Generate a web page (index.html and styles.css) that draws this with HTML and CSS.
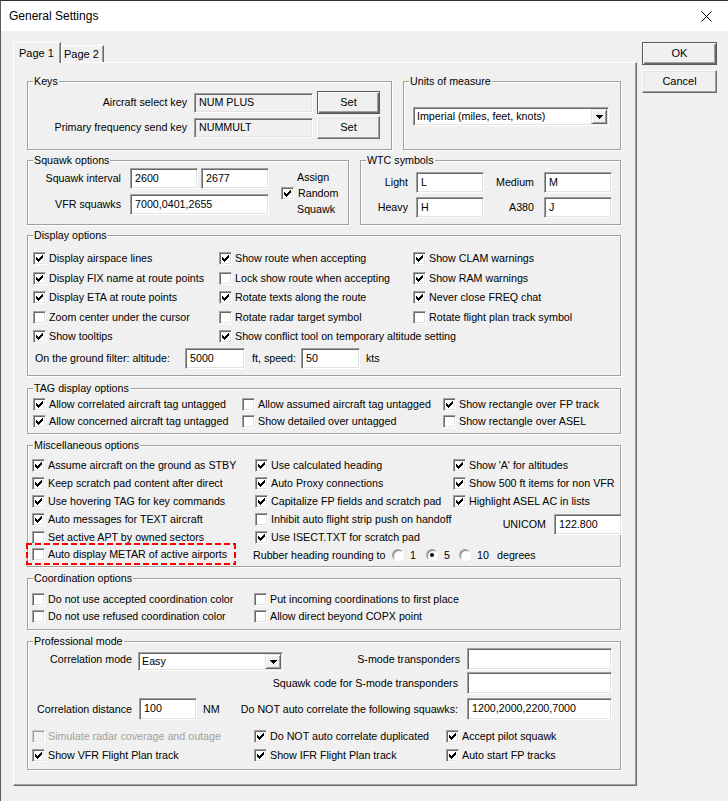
FILE: index.html
```html
<!DOCTYPE html>
<html>
<head>
<meta charset="utf-8">
<title>General Settings</title>
<link rel="stylesheet" href="styles.css">
</head>
<body>
<div class="window">
  <div class="titlebar">
    <span class="ttl">General Settings</span>
    <svg class="close" width="11" height="11" viewBox="0 0 11 11"><path d="M0.5 0.5L10.5 10.5M10.5 0.5L0.5 10.5" stroke="#000" stroke-width="1" fill="none"/></svg>
  </div>
  <div class="client">
    <div class="tabs">
      <div class="tabstrip">
        <div class="tab sel">Page 1</div>
        <div class="tab t2">Page 2</div>
      </div>
      <div class="panel">

        <div class="row r1">
          <div class="grp keys">
            <div class="lg">Keys</div>
            <div class="krow k1"><span class="klbl">Aircraft select key</span><span class="ed ro kin">NUM PLUS</span><span class="btn def kbtn">Set</span></div>
            <div class="krow k2"><span class="klbl">Primary frequency send key</span><span class="ed ro kin">NUMMULT</span><span class="btn kbtn">Set</span></div>
          </div>
          <div class="grp units">
            <div class="lg">Units of measure</div>
            <div class="combo ucombo"><span class="ctext">Imperial (miles, feet, knots)</span><span class="cbtn"><svg width="7" height="4" viewBox="0 0 7 4"><path d="M0 0h7v1h-1v1h-1v1h-1v1h-1v-1h-1v-1h-1v-1h-1z"/></svg></span></div>
          </div>
        </div>

        <div class="row r2">
          <div class="grp sq">
            <div class="lg">Squawk options</div>
            <div class="sqbody">
              <div class="sqleft">
                <div class="sqrow s1"><span class="sqlbl">Squawk interval</span><span class="ed sqi">2600</span><span class="ed sqi sqi2">2677</span></div>
                <div class="sqrow s2"><span class="sqlbl">VFR squawks</span><span class="ed sqw">7000,0401,2655</span></div>
              </div>
              <div class="assign">
                <div class="as1">Assign</div>
                <label class="chk as2"><span class="cb"><svg viewBox="0 0 7 7" width="7" height="7"><path d="M0 2h1v3H0zM1 3h1v3H1zM2 4h1v3H2zM3 3h1v3H3zM4 2h1v3H4zM5 1h1v3H5zM6 0h1v3H6z"/></svg></span>Random</label>
                <div class="as3">Squawk</div>
              </div>
            </div>
          </div>
          <div class="grp wtc">
            <div class="lg">WTC symbols</div>
            <div class="wgrid">
              <span class="wl1">Light</span><span class="ed">L</span><span class="wl2">Medium</span><span class="ed">M</span>
              <span class="wl1">Heavy</span><span class="ed">H</span><span class="wl2">A380</span><span class="ed">J</span>
            </div>
          </div>
        </div>

        <div class="grp full disp">
          <div class="lg">Display options</div>
          <div class="cgrid dgrid">
            <label class="chk"><span class="cb"><svg viewBox="0 0 7 7" width="7" height="7"><path d="M0 2h1v3H0zM1 3h1v3H1zM2 4h1v3H2zM3 3h1v3H3zM4 2h1v3H4zM5 1h1v3H5zM6 0h1v3H6z"/></svg></span>Display airspace lines</label>
            <label class="chk"><span class="cb"><svg viewBox="0 0 7 7" width="7" height="7"><path d="M0 2h1v3H0zM1 3h1v3H1zM2 4h1v3H2zM3 3h1v3H3zM4 2h1v3H4zM5 1h1v3H5zM6 0h1v3H6z"/></svg></span>Show route when accepting</label>
            <label class="chk"><span class="cb"><svg viewBox="0 0 7 7" width="7" height="7"><path d="M0 2h1v3H0zM1 3h1v3H1zM2 4h1v3H2zM3 3h1v3H3zM4 2h1v3H4zM5 1h1v3H5zM6 0h1v3H6z"/></svg></span>Show CLAM warnings</label>

            <label class="chk"><span class="cb"><svg viewBox="0 0 7 7" width="7" height="7"><path d="M0 2h1v3H0zM1 3h1v3H1zM2 4h1v3H2zM3 3h1v3H3zM4 2h1v3H4zM5 1h1v3H5zM6 0h1v3H6z"/></svg></span>Display FIX name at route points</label>
            <label class="chk"><span class="cb"></span>Lock show route when accepting</label>
            <label class="chk"><span class="cb"><svg viewBox="0 0 7 7" width="7" height="7"><path d="M0 2h1v3H0zM1 3h1v3H1zM2 4h1v3H2zM3 3h1v3H3zM4 2h1v3H4zM5 1h1v3H5zM6 0h1v3H6z"/></svg></span>Show RAM warnings</label>

            <label class="chk"><span class="cb"><svg viewBox="0 0 7 7" width="7" height="7"><path d="M0 2h1v3H0zM1 3h1v3H1zM2 4h1v3H2zM3 3h1v3H3zM4 2h1v3H4zM5 1h1v3H5zM6 0h1v3H6z"/></svg></span>Display ETA at route points</label>
            <label class="chk"><span class="cb"><svg viewBox="0 0 7 7" width="7" height="7"><path d="M0 2h1v3H0zM1 3h1v3H1zM2 4h1v3H2zM3 3h1v3H3zM4 2h1v3H4zM5 1h1v3H5zM6 0h1v3H6z"/></svg></span>Rotate texts along the route</label>
            <label class="chk"><span class="cb"><svg viewBox="0 0 7 7" width="7" height="7"><path d="M0 2h1v3H0zM1 3h1v3H1zM2 4h1v3H2zM3 3h1v3H3zM4 2h1v3H4zM5 1h1v3H5zM6 0h1v3H6z"/></svg></span>Never close FREQ chat</label>

            <label class="chk"><span class="cb"></span>Zoom center under the cursor</label>
            <label class="chk"><span class="cb"></span>Rotate radar target symbol</label>
            <label class="chk"><span class="cb"></span>Rotate flight plan track symbol</label>

            <label class="chk"><span class="cb"><svg viewBox="0 0 7 7" width="7" height="7"><path d="M0 2h1v3H0zM1 3h1v3H1zM2 4h1v3H2zM3 3h1v3H3zM4 2h1v3H4zM5 1h1v3H5zM6 0h1v3H6z"/></svg></span>Show tooltips</label>
            <label class="chk span2"><span class="cb"><svg viewBox="0 0 7 7" width="7" height="7"><path d="M0 2h1v3H0zM1 3h1v3H1zM2 4h1v3H2zM3 3h1v3H3zM4 2h1v3H4zM5 1h1v3H5zM6 0h1v3H6z"/></svg></span>Show conflict tool on temporary altitude setting</label>
          </div>
          <div class="filt">
            <span class="fl1">On the ground filter: altitude:</span><span class="ed fi1">5000</span><span class="fl2">ft, speed:</span><span class="ed fi2">50</span><span class="fl3">kts</span>
          </div>
        </div>

        <div class="grp full tag">
          <div class="lg">TAG display options</div>
          <div class="cgrid tgrid">
            <label class="chk"><span class="cb"><svg viewBox="0 0 7 7" width="7" height="7"><path d="M0 2h1v3H0zM1 3h1v3H1zM2 4h1v3H2zM3 3h1v3H3zM4 2h1v3H4zM5 1h1v3H5zM6 0h1v3H6z"/></svg></span>Allow correlated aircraft tag untagged</label>
            <label class="chk"><span class="cb"></span>Allow assumed aircraft tag untagged</label>
            <label class="chk"><span class="cb"><svg viewBox="0 0 7 7" width="7" height="7"><path d="M0 2h1v3H0zM1 3h1v3H1zM2 4h1v3H2zM3 3h1v3H3zM4 2h1v3H4zM5 1h1v3H5zM6 0h1v3H6z"/></svg></span>Show rectangle over FP track</label>
            <label class="chk"><span class="cb"><svg viewBox="0 0 7 7" width="7" height="7"><path d="M0 2h1v3H0zM1 3h1v3H1zM2 4h1v3H2zM3 3h1v3H3zM4 2h1v3H4zM5 1h1v3H5zM6 0h1v3H6z"/></svg></span>Allow concerned aircraft tag untagged</label>
            <label class="chk"><span class="cb"></span>Show detailed over untagged</label>
            <label class="chk"><span class="cb"></span>Show rectangle over ASEL</label>
          </div>
        </div>

        <div class="grp full misc">
          <div class="lg">Miscellaneous options</div>
          <div class="cgrid mgrid">
            <label class="chk"><span class="cb"><svg viewBox="0 0 7 7" width="7" height="7"><path d="M0 2h1v3H0zM1 3h1v3H1zM2 4h1v3H2zM3 3h1v3H3zM4 2h1v3H4zM5 1h1v3H5zM6 0h1v3H6z"/></svg></span>Assume aircraft on the ground as STBY</label>
            <label class="chk"><span class="cb"><svg viewBox="0 0 7 7" width="7" height="7"><path d="M0 2h1v3H0zM1 3h1v3H1zM2 4h1v3H2zM3 3h1v3H3zM4 2h1v3H4zM5 1h1v3H5zM6 0h1v3H6z"/></svg></span>Use calculated heading</label>
            <label class="chk"><span class="cb"><svg viewBox="0 0 7 7" width="7" height="7"><path d="M0 2h1v3H0zM1 3h1v3H1zM2 4h1v3H2zM3 3h1v3H3zM4 2h1v3H4zM5 1h1v3H5zM6 0h1v3H6z"/></svg></span>Show 'A' for altitudes</label>

            <label class="chk"><span class="cb"><svg viewBox="0 0 7 7" width="7" height="7"><path d="M0 2h1v3H0zM1 3h1v3H1zM2 4h1v3H2zM3 3h1v3H3zM4 2h1v3H4zM5 1h1v3H5zM6 0h1v3H6z"/></svg></span>Keep scratch pad content after direct</label>
            <label class="chk"><span class="cb"><svg viewBox="0 0 7 7" width="7" height="7"><path d="M0 2h1v3H0zM1 3h1v3H1zM2 4h1v3H2zM3 3h1v3H3zM4 2h1v3H4zM5 1h1v3H5zM6 0h1v3H6z"/></svg></span>Auto Proxy connections</label>
            <label class="chk"><span class="cb"><svg viewBox="0 0 7 7" width="7" height="7"><path d="M0 2h1v3H0zM1 3h1v3H1zM2 4h1v3H2zM3 3h1v3H3zM4 2h1v3H4zM5 1h1v3H5zM6 0h1v3H6z"/></svg></span>Show 500 ft items for non VFR</label>

            <label class="chk"><span class="cb"><svg viewBox="0 0 7 7" width="7" height="7"><path d="M0 2h1v3H0zM1 3h1v3H1zM2 4h1v3H2zM3 3h1v3H3zM4 2h1v3H4zM5 1h1v3H5zM6 0h1v3H6z"/></svg></span>Use hovering TAG for key commands</label>
            <label class="chk"><span class="cb"><svg viewBox="0 0 7 7" width="7" height="7"><path d="M0 2h1v3H0zM1 3h1v3H1zM2 4h1v3H2zM3 3h1v3H3zM4 2h1v3H4zM5 1h1v3H5zM6 0h1v3H6z"/></svg></span>Capitalize FP fields and scratch pad</label>
            <label class="chk"><span class="cb"><svg viewBox="0 0 7 7" width="7" height="7"><path d="M0 2h1v3H0zM1 3h1v3H1zM2 4h1v3H2zM3 3h1v3H3zM4 2h1v3H4zM5 1h1v3H5zM6 0h1v3H6z"/></svg></span>Highlight ASEL AC in lists</label>

            <label class="chk"><span class="cb"><svg viewBox="0 0 7 7" width="7" height="7"><path d="M0 2h1v3H0zM1 3h1v3H1zM2 4h1v3H2zM3 3h1v3H3zM4 2h1v3H4zM5 1h1v3H5zM6 0h1v3H6z"/></svg></span>Auto messages for TEXT aircraft</label>
            <label class="chk"><span class="cb"></span>Inhibit auto flight strip push on handoff</label>
            <div class="unicom"><span class="ul">UNICOM</span><span class="ed ui">122.800</span></div>

            <label class="chk"><span class="cb"></span>Set active APT by owned sectors</label>
            <label class="chk"><span class="cb"><svg viewBox="0 0 7 7" width="7" height="7"><path d="M0 2h1v3H0zM1 3h1v3H1zM2 4h1v3H2zM3 3h1v3H3zM4 2h1v3H4zM5 1h1v3H5zM6 0h1v3H6z"/></svg></span>Use ISECT.TXT for scratch pad</label>

            <div class="hlcell"><div class="hl"><label class="chk"><span class="cb"></span>Auto display METAR of active airports</label></div></div>
            <div class="rubber span2">
              <span class="rt">Rubber heading rounding to</span>
              <span class="rad r1w"><span class="rb"></span>1</span>
              <span class="rad r2w"><span class="rb"><span class="dot"></span></span>5</span>
              <span class="rad r3w"><span class="rb"></span>10</span>
              <span class="deg">degrees</span>
            </div>
          </div>
        </div>

        <div class="grp full coord">
          <div class="lg">Coordination options</div>
          <div class="cgrid cogrid">
            <label class="chk"><span class="cb"></span>Do not use accepted coordination color</label>
            <label class="chk"><span class="cb"></span>Put incoming coordinations to first place</label>
            <label class="chk"><span class="cb"></span>Do not use refused coordination color</label>
            <label class="chk"><span class="cb"></span>Allow direct beyond COPX point</label>
          </div>
        </div>

        <div class="grp full prof">
          <div class="lg">Professional mode</div>
          <div class="prow pa">
            <span class="pl1">Correlation mode</span>
            <span class="combo cm"><span class="ctext">Easy</span><span class="cbtn"><svg width="7" height="4" viewBox="0 0 7 4"><path d="M0 0h7v1h-1v1h-1v1h-1v1h-1v-1h-1v-1h-1v-1h-1z"/></svg></span></span>
            <span class="pr pr1">S-mode transponders</span>
            <span class="ed pin"></span>
          </div>
          <div class="prow pb">
            <span class="pr pr2">Squawk code for S-mode transponders</span>
            <span class="ed pin"></span>
          </div>
          <div class="prow pc">
            <span class="pl2">Correlation distance</span>
            <span class="ed cdi">100</span>
            <span class="nm">NM</span>
            <span class="pr pr2">Do NOT auto correlate the following squawks:</span>
            <span class="ed pin">1200,2000,2200,7000</span>
          </div>
          <div class="cgrid pgrid">
            <label class="chk dis"><span class="cb"></span>Simulate radar coverage and outage</label>
            <label class="chk"><span class="cb"><svg viewBox="0 0 7 7" width="7" height="7"><path d="M0 2h1v3H0zM1 3h1v3H1zM2 4h1v3H2zM3 3h1v3H3zM4 2h1v3H4zM5 1h1v3H5zM6 0h1v3H6z"/></svg></span>Do NOT auto correlate duplicated</label>
            <label class="chk"><span class="cb"><svg viewBox="0 0 7 7" width="7" height="7"><path d="M0 2h1v3H0zM1 3h1v3H1zM2 4h1v3H2zM3 3h1v3H3zM4 2h1v3H4zM5 1h1v3H5zM6 0h1v3H6z"/></svg></span>Accept pilot squawk</label>
            <label class="chk"><span class="cb"><svg viewBox="0 0 7 7" width="7" height="7"><path d="M0 2h1v3H0zM1 3h1v3H1zM2 4h1v3H2zM3 3h1v3H3zM4 2h1v3H4zM5 1h1v3H5zM6 0h1v3H6z"/></svg></span>Show VFR Flight Plan track</label>
            <label class="chk"><span class="cb"><svg viewBox="0 0 7 7" width="7" height="7"><path d="M0 2h1v3H0zM1 3h1v3H1zM2 4h1v3H2zM3 3h1v3H3zM4 2h1v3H4zM5 1h1v3H5zM6 0h1v3H6z"/></svg></span>Show IFR Flight Plan track</label>
            <label class="chk"><span class="cb"><svg viewBox="0 0 7 7" width="7" height="7"><path d="M0 2h1v3H0zM1 3h1v3H1zM2 4h1v3H2zM3 3h1v3H3zM4 2h1v3H4zM5 1h1v3H5zM6 0h1v3H6z"/></svg></span>Auto start FP tracks</label>
          </div>
        </div>

      </div>
    </div>
    <div class="side">
      <div class="btn def sbtn">OK</div>
      <div class="btn sbtn cbtn2">Cancel</div>
    </div>
  </div>
</div>
</body>
</html>
```

FILE: styles.css
```css
* { box-sizing: border-box; }
html, body { margin: 0; padding: 0; }
body {
  width: 728px;
  height: 801px;
  overflow: hidden;
  background: #f0f0f0;
  font-family: "Liberation Sans", Arial, sans-serif;
  font-size: 10.7px;
  line-height: 13px;
  color: #000;
}
svg { display: block; shape-rendering: crispEdges; }
.window {
  height: 801px;
  border-top: 1px solid #2e2e2e;
  border-left: 1px solid #5c5c5c;
}
.titlebar {
  height: 30px;
  background: #fff;
  display: flex;
  align-items: center;
  justify-content: space-between;
  padding: 0 16px 0 8px;
  font-size: 12px;
}
.titlebar .close { shape-rendering: auto; }
.client {
  display: flex;
  padding: 11px 0 0 12px;
}
.tabs { width: 624px; }
.tabstrip {
  display: flex;
  align-items: flex-end;
  height: 20px;
}
.tab {
  background: #f0f0f0;
  border-top: 1px solid #fff;
  border-left: 1px solid #fff;
  border-right: 1px solid #696969;
  box-shadow: inset -1px 0 #a0a0a0;
  display: flex;
  align-items: center;
  font-size: 11px;
}
.tab.sel {
  width: 48px;
  height: 21px;
  margin-bottom: -1px;
  padding-left: 5px;
  position: relative;
  z-index: 1;
}
.tab.t2 {
  width: 43px;
  height: 17px;
  padding-left: 2px;
}
.panel {
  width: 624px;
  height: 724px;
  border: 1px solid;
  border-color: #fff #696969 #696969 #fff;
  box-shadow: inset -1px -1px #a0a0a0;
  padding-left: 13px;
}
.side {
  margin-left: 5px;
  display: flex;
  flex-direction: column;
  gap: 5px;
}
.btn {
  display: flex;
  align-items: center;
  justify-content: center;
  background: #f0f0f0;
  border: 1px solid;
  border-color: #fff #696969 #696969 #fff;
  box-shadow: inset -1px -1px #a0a0a0, inset 1px 1px #e3e3e3;
  font-size: 11px;
}
.btn.def {
  border: 1px solid #5a5a5a;
  box-shadow: inset 1px 1px #fff, inset -1px -1px #696969, inset -2px -2px #a0a0a0;
}
.sbtn { width: 75px; height: 23px; }

.grp {
  border: 1px solid #a0a0a0;
  box-shadow: inset 1px 1px #fff, 1px 1px #fff;
}
.lg {
  width: max-content;
  height: 13px;
  margin: -7px 0 0 5px;
  padding: 0 1px;
  background: #f0f0f0;
}
.full { width: 594px; }
.row { display: flex; gap: 11px; }
.r1 { margin-top: 18px; }
.r2 { margin-top: 10px; }

.ed {
  display: flex;
  align-items: center;
  height: 21px;
  padding: 0 0 1px 4px;
  background: #fff;
  border: 1px solid;
  border-color: #a0a0a0 #fff #fff #a0a0a0;
  box-shadow: inset 1px 1px #696969, inset -1px -1px #e3e3e3;
  white-space: nowrap;
}
.ed.ro { background: #f0f0f0; }

/* Keys */
.keys { width: 365px; height: 69px; }
.krow { display: flex; align-items: center; height: 23px; }
.k1 { margin-top: 3px; }
.k2 { margin-top: 2px; }
.klbl { width: 159px; text-align: right; }
.kin { width: 119px; height: 20px; margin-left: 7px; }
.kbtn { width: 63px; height: 23px; margin-left: 4px; }

/* Units */
.units { width: 218px; height: 69px; }
.combo {
  display: flex;
  background: #fff;
  border: 1px solid;
  border-color: #a0a0a0 #fff #fff #a0a0a0;
  box-shadow: inset 1px 1px #696969, inset -1px -1px #e3e3e3;
}
.ctext { flex: 1; display: flex; align-items: center; padding-left: 3px; white-space: nowrap; }
.cbtn {
  width: 16px;
  margin: 1px 1px 1px 0;
  background: #f0f0f0;
  border: 1px solid;
  border-color: #e3e3e3 #696969 #696969 #e3e3e3;
  box-shadow: inset 1px 1px #fff, inset -1px -1px #a0a0a0;
  display: flex;
  align-items: center;
  justify-content: center;
}
.ucombo { width: 196px; height: 19px; margin: 19px 0 0 9px; }

/* Squawk */
.sq { width: 322px; height: 65px; }
.sqbody { display: flex; }
.sqrow { display: flex; align-items: center; height: 21px; }
.s1 { margin-top: 1px; }
.s2 { margin-top: 5px; }
.sqlbl { width: 93px; text-align: right; }
.sqi { width: 68px; margin-left: 9px; }
.sqi.sqi2 { margin-left: 3px; }
.sqw { width: 139px; margin-left: 9px; }
.assign { margin: 3px 0 0 12px; }
.as1 { height: 14px; line-height: 14px; padding-left: 16px; }
.as2 { height: 19px; }
.as2 .cb { margin-right: 4px; }
.as3 { height: 13px; padding-left: 16px; }

/* WTC */
.wtc { width: 261px; height: 65px; }
.wgrid {
  display: grid;
  grid-template-columns: 55px 68px 60px 68px;
  grid-auto-rows: 21px;
  row-gap: 4px;
  margin-top: 5px;
}
.wgrid > span:not(.ed) { display: flex; align-items: center; justify-content: flex-end; }
.wl1 { padding-right: 8px; }
.wl2 { padding-right: 10px; }

/* checkbox grids */
.cgrid { display: grid; }
.chk { display: flex; align-items: center; white-space: nowrap; }
.cb {
  width: 13px;
  height: 13px;
  flex: none;
  margin-right: 3px;
  background: #fff;
  border: 1px solid;
  border-color: #a0a0a0 #fff #fff #a0a0a0;
  box-shadow: inset 1px 1px #696969, inset -1px -1px #e3e3e3;
  display: flex;
  align-items: center;
  justify-content: center;
}
.span2 { grid-column: span 2; }
.dis { color: #a0a0a0; }
.dis .cb { background: #f0f0f0; border-color: #c8c8c8 #fff #fff #c8c8c8; box-shadow: inset 1px 1px #a0a0a0, inset -1px -1px #e3e3e3; }

.disp { margin-top: 10px; height: 141px; }
.dgrid {
  grid-template-columns: 186px 194px 1fr;
  grid-auto-rows: 19.5px;
  margin-top: 7px;
  padding-left: 5px;
}
.filt { display: flex; align-items: center; height: 21px; margin-top: 1.5px; padding-left: 7px; }
.fl1 { width: 150px; }
.fi1 { width: 60px; }
.fl2 { width: 49px; margin-left: 7px; }
.fi2 { width: 59px; }
.fl3 { margin-left: 6px; }

.tag { margin-top: 12px; height: 46px; }
.tgrid {
  grid-template-columns: 209px 201px 1fr;
  grid-auto-rows: 17px;
  margin-top: 1px;
  padding-left: 5px;
}

.misc { margin-top: 11px; height: 122px; }
.mgrid {
  grid-template-columns: 223px 198px 1fr;
  grid-auto-rows: 18px;
  margin-top: 4px;
  padding-left: 4px;
}
.unicom {
  grid-row: span 2;
  display: flex;
  align-items: center;
  justify-content: flex-end;
  align-self: start;
  margin: 4px -2px 0 0;
}
.ul { margin-right: 8px; }
.ui { width: 68px; flex: none; }
.hl {
  width: 210px;
  height: 22px;
  margin: -3px 0 0 -6px;
  padding-left: 6px;
  display: flex;
  align-items: center;
  background:
    repeating-linear-gradient(to right, #f00 0 6px, transparent 6px 9px) top left / 100% 2px no-repeat,
    repeating-linear-gradient(to right, #f00 0 6px, transparent 6px 9px) bottom left / 100% 2px no-repeat,
    repeating-linear-gradient(to bottom, #f00 0 6px, transparent 6px 9px) top left / 2px 100% no-repeat,
    repeating-linear-gradient(to bottom, #f00 0 6px, transparent 6px 9px) top right / 2px 100% no-repeat;
}
.rubber { display: flex; align-items: center; margin-left: -2px; white-space: nowrap; }
.rt { width: 139px; flex: none; }
.rad { display: flex; align-items: center; flex: none; }
.r1w { width: 34px; }
.r2w { width: 33px; }
.r3w { width: 38px; }
.rb {
  width: 12px;
  height: 12px;
  flex: none;
  margin-right: 6px;
  border-radius: 50%;
  background: #fff;
  border: 1px solid;
  border-color: #a0a0a0 #fff #fff #a0a0a0;
  box-shadow: inset 1px 1px #8a8a8a;
  display: flex;
  align-items: center;
  justify-content: center;
}
.dot { width: 4px; height: 4px; border-radius: 50%; background: #000; }

.coord { margin-top: 11px; height: 52px; }
.cogrid {
  grid-template-columns: 222px 1fr;
  grid-auto-rows: 17px;
  margin-top: 6px;
  padding-left: 4px;
}

.prof { margin-top: 11px; height: 129px; }
.prow { display: flex; align-items: center; height: 22px; padding-right: 8px; white-space: nowrap; }
.pa { margin-top: 0; }
.pb { margin-top: 2px; }
.pc { margin-top: 4px; }
.pl1 { width: 110px; padding-left: 22px; }
.cm { width: 145px; height: 19px; align-self: flex-start; margin-top: 4px; }
.pr { flex: 1; text-align: right; }
.pr1 { padding-right: 7px; }
.pr2 { padding-right: 9px; }
.pin { width: 145px; height: 22px; flex: none; }
.pl2 { width: 111px; padding-left: 9px; }
.cdi { width: 58px; height: 22px; }
.nm { margin-left: 6px; }
.pgrid {
  grid-template-columns: 222px 192px 1fr;
  grid-auto-rows: 19px;
  margin-top: 7px;
  padding-left: 4px;
}
```
